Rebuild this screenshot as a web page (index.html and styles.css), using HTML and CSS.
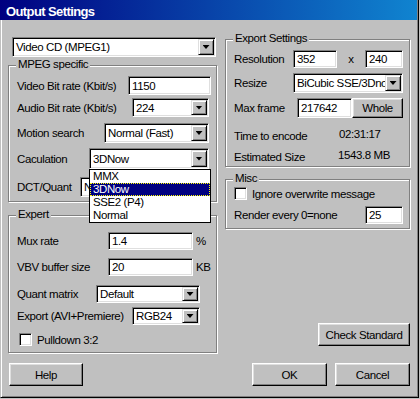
FILE: index.html
```html
<!DOCTYPE html>
<html lang="en">
<head>
  <meta charset="UTF-8">
  <title>Output Settings</title>
  <link rel="stylesheet" href="styles.css">
</head>
<body>

<div class="window">
  <div class="titlebar">Output Settings</div>

  <div class="dialog">
    <div class="col col-left">
      <div class="combo format-combo"><span class="combo-text">Video CD (MPEG1)</span><span class="drop-btn"></span></div>

      <div class="group mpeg">
        <span class="group-title">MPEG specific</span>
        <div class="row row-vbr">
          <span class="lbl">Video Bit rate (Kbit/s)</span>
          <div class="field vbr-field">1150</div>
        </div>
        <div class="row row-abr">
          <span class="lbl">Audio Bit rate (Kbit/s)</span>
          <div class="combo abr-combo"><span class="combo-text">224</span><span class="drop-btn"></span></div>
        </div>
        <div class="row row-motion">
          <span class="lbl">Motion search</span>
          <div class="combo motion-combo"><span class="combo-text">Normal (Fast)</span><span class="drop-btn"></span></div>
        </div>
        <div class="row row-calc">
          <span class="lbl">Caculation</span>
          <div class="combo calc-combo"><span class="combo-text">3DNow</span><span class="drop-btn"></span></div>
        </div>
        <div class="row row-dct">
          <span class="lbl">DCT/Quant</span>
          <div class="combo dct-combo"><span class="combo-text">Normal</span><span class="drop-btn"></span></div>
        </div>

        <ul class="droplist">
          <li>MMX</li>
          <li class="sel">3DNow</li>
          <li>SSE2 (P4)</li>
          <li>Normal</li>
        </ul>
      </div>

      <div class="group expert">
        <span class="group-title">Expert</span>
        <div class="row row-mux">
          <span class="lbl">Mux rate</span>
          <div class="field expert-field">1.4</div>
          <span class="unit">%</span>
        </div>
        <div class="row row-vbv">
          <span class="lbl">VBV buffer size</span>
          <div class="field expert-field">20</div>
          <span class="unit">KB</span>
        </div>
        <div class="row row-quant">
          <span class="lbl">Quant matrix</span>
          <div class="combo quant-combo"><span class="combo-text">Default</span><span class="drop-btn"></span></div>
        </div>
        <div class="row row-export">
          <span class="lbl">Export (AVI+Premiere)</span>
          <div class="combo export-combo"><span class="combo-text">RGB24</span><span class="drop-btn"></span></div>
        </div>
        <div class="row row-pull">
          <span class="check pull-check"></span>
          <span class="check-label">Pulldown 3:2</span>
        </div>
      </div>

      <button class="btn help-btn">Help</button>
    </div>

    <div class="col col-right">
      <div class="group export">
        <span class="group-title">Export Settings</span>
        <div class="row row-res">
          <span class="lbl res-lbl">Resolution</span>
          <div class="field res-w">352</div>
          <span class="times">x</span>
          <div class="field res-h">240</div>
        </div>
        <div class="row row-resize">
          <span class="lbl">Resize</span>
          <div class="combo resize-combo"><span class="combo-text">BiCubic SSE/3Dnow</span><span class="drop-btn"></span></div>
        </div>
        <div class="row row-max">
          <span class="lbl">Max frame</span>
          <div class="field max-field">217642</div>
          <button class="btn whole-btn">Whole</button>
        </div>
        <div class="row row-time">
          <span class="lbl info-lbl">Time to encode</span>
          <span class="info-val">02:31:17</span>
        </div>
        <div class="row row-size">
          <span class="lbl info-lbl size-lbl">Estimated Size</span>
          <span class="info-val">1543.8 MB</span>
        </div>
      </div>

      <div class="group misc">
        <span class="group-title">Misc</span>
        <div class="row row-ignore">
          <span class="check"></span>
          <span class="check-label">Ignore overwrite message</span>
        </div>
        <div class="row row-render">
          <span class="lbl">Render every 0=none</span>
          <div class="field render-field">25</div>
        </div>
      </div>

      <button class="btn check-btn">Check Standard</button>

      <div class="actions">
        <button class="btn ok-btn">OK</button>
        <button class="btn cancel-btn">Cancel</button>
      </div>
    </div>
  </div>
</div>

</body>
</html>
```

FILE: styles.css
```css
* {
  box-sizing: border-box;
}

body {
  margin: 0;
  background: #c0c0c0;
  color: #000;
  font-family: "Liberation Sans", Arial, sans-serif;
  font-size: 11.5px;
  letter-spacing: -0.4px;
}

button {
  font: inherit;
  color: inherit;
  letter-spacing: inherit;
}

.window {
  width: 419px;
  height: 398px;
  border-left: 1px solid #c0c0c0;
  border-right: 1px solid #000;
  border-bottom: 1px solid #000;
  box-shadow: inset 1px 0 #fff, inset -1px -1px #808080;
}

.titlebar {
  height: 20px;
  margin: 0 1px 0 -1px;
  padding: 3px 0 0 6px;
  background: linear-gradient(to right, #000080, #1084d0);
  color: #fff;
  font-weight: bold;
  font-size: 13px;
  line-height: 18px;
  letter-spacing: -0.6px;
}

.dialog {
  display: flex;
  gap: 7px;
  padding-left: 7px;
}

.col {
  display: flex;
  flex-direction: column;
}

.col-left {
  width: 210px;
}

.col-right {
  width: 185px;
}

/* group boxes */
.group {
  position: relative;
  border: 1px solid #808080;
  box-shadow: 1px 1px 0 #fff, inset 1px 1px 0 #fff;
}

.group-title {
  position: absolute;
  top: -9px;
  left: 7px;
  padding: 0 2px;
  background: #c0c0c0;
  line-height: 14px;
  white-space: nowrap;
}

.mpeg {
  width: 209px;
  height: 137px;
  margin-top: 8px;
}

.expert {
  width: 209px;
  height: 138px;
  margin-top: 13px;
}

.export {
  height: 128px;
  margin-top: 19px;
}

.misc {
  height: 50px;
  margin-top: 12px;
}

/* rows */
.row {
  display: flex;
  align-items: center;
  padding: 0 7px 0 8px;
}

.export .row,
.misc .row {
  padding-right: 6px;
}

.lbl {
  white-space: nowrap;
}

.row-vbr { margin-top: 10px; height: 19px; }
.row-abr { margin-top: 3px; height: 19px; }
.row-motion { margin-top: 6px; height: 20px; }
.row-calc { margin-top: 5px; height: 21px; }
.row-dct { margin-top: 8px; height: 20px; }

.row-mux { margin-top: 16px; height: 18px; }
.row-vbv { margin-top: 8px; height: 18px; }
.row-quant { margin-top: 9px; height: 18px; }
.row-export { margin-top: 4px; height: 18px; }
.row-pull { margin-top: 8px; height: 13px; }

.row-res { margin-top: 10px; height: 18px; }
.row-resize { margin-top: 5px; height: 20px; }
.row-max { margin-top: 5px; height: 20px; }
.row-time { margin-top: 11px; height: 13px; }
.row-size { margin-top: 8px; height: 13px; }

.row-ignore { margin-top: 7px; height: 13px; }
.row-render { margin-top: 6px; height: 18px; }

/* sunken edit fields */
.field {
  flex-shrink: 0;
  display: flex;
  align-items: center;
  height: 100%;
  padding: 0 3px;
  background: #fff;
  border: 1px solid;
  border-color: #808080 #fff #fff #808080;
  box-shadow: inset 1px 1px #000, inset -1px -1px #dfdfdf;
  white-space: nowrap;
  overflow: hidden;
}

.vbr-field { width: 83px; margin: 0 -2px 0 auto; }
.expert-field { width: 85px; margin-left: auto; }
.res-w { width: 44px; }
.res-h { width: 38px; }
.max-field { width: 55px; margin-left: auto; }
.render-field { width: 38px; margin-left: auto; }

.unit {
  width: 13px;
  margin-left: 3px;
}

.res-lbl {
  width: 59px;
}

.times {
  flex: 1;
  text-align: center;
}

/* combo boxes */
.combo {
  flex-shrink: 0;
  display: flex;
  height: 100%;
  padding: 1px;
  background: #fff;
  border: 1px solid;
  border-color: #808080 #fff #fff #808080;
  box-shadow: inset 1px 1px #000, inset -1px -1px #dfdfdf;
  margin-left: auto;
}

.combo-text {
  flex: 1;
  display: flex;
  align-items: center;
  padding-left: 2px;
  white-space: nowrap;
  overflow: hidden;
}

.drop-btn {
  flex: 0 0 16px;
  display: flex;
  align-items: center;
  justify-content: center;
  background: #c0c0c0;
  border: 1px solid;
  border-color: #dfdfdf #000 #000 #dfdfdf;
  box-shadow: inset 1px 1px #fff, inset -1px -1px #808080;
}

.drop-btn::after {
  content: "";
  width: 7px;
  height: 4px;
  background: #000;
  clip-path: polygon(0 0, 100% 0, 50% 100%);
}

.format-combo { width: 204px; height: 20px; margin: 17px 0 0 4px; }
.abr-combo { width: 77px; }
.motion-combo { width: 105px; }
.calc-combo { width: 120px; }
.dct-combo { width: 129px; }
.quant-combo { width: 104px; margin-right: 9px; }
.export-combo { width: 68px; margin-right: 9px; }
.resize-combo { width: 110px; }

/* open dropdown list, drawn over the groups below */
.droplist {
  position: absolute;
  z-index: 2;
  left: 80px;
  top: 103px;
  width: 122px;
  height: 54px;
  margin: 0;
  padding: 0;
  list-style: none;
  background: #fff;
  border: 1px solid #000;
}

.droplist li {
  height: 13px;
  line-height: 13px;
  padding-left: 3px;
}

.droplist .sel {
  background: #000080;
  color: #fff;
  outline: 1px dotted #ff0;
  outline-offset: -1px;
}

/* checkboxes */
.check {
  flex-shrink: 0;
  width: 13px;
  height: 13px;
  background: #fff;
  border: 1px solid;
  border-color: #808080 #fff #fff #808080;
  box-shadow: inset 1px 1px #000, inset -1px -1px #dfdfdf;
}

.pull-check {
  margin-left: 2px;
}

.check-label {
  margin-left: 5px;
  white-space: nowrap;
}

/* info lines */
.info-lbl {
  width: 105px;
}

.size-lbl {
  width: 104px;
}

.info-val {
  margin-top: -3px;
  white-space: nowrap;
}

/* buttons */
.btn {
  padding: 0;
  background: #c0c0c0;
  border: 1px solid;
  border-color: #fff #000 #000 #fff;
  box-shadow: inset -1px -1px #808080, inset 1px 1px #dfdfdf;
  text-align: center;
  white-space: nowrap;
}

.whole-btn {
  width: 51px;
  height: 100%;
}

.help-btn {
  width: 74px;
  height: 23px;
  margin: 10px 0 0 1px;
}

.check-btn {
  width: 92px;
  height: 23px;
  margin: 94px 0 0 auto;
}

.actions {
  display: flex;
  justify-content: flex-end;
  gap: 8px;
  margin-top: 17px;
}

.ok-btn,
.cancel-btn {
  width: 75px;
  height: 23px;
}
```
